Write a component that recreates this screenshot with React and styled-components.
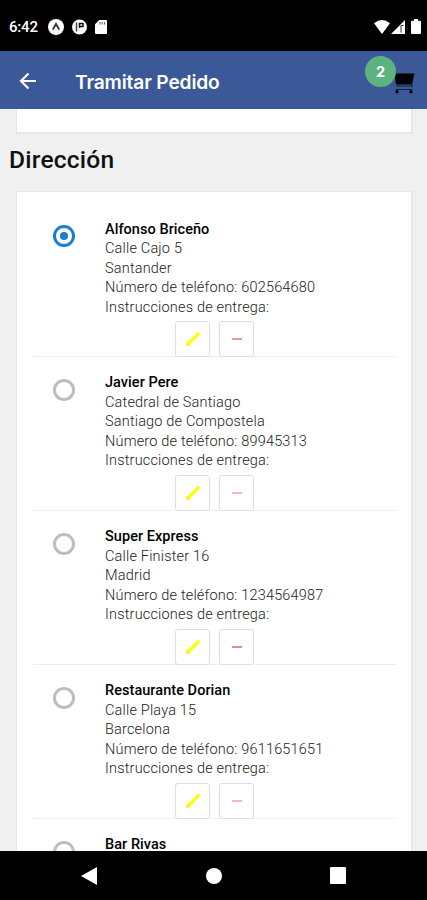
import { useState } from 'react';
import styled, { createGlobalStyle } from 'styled-components';

const GlobalStyle = createGlobalStyle`
    body {
        margin: 0;
        background: #f0f0f0;
        font-family: Roboto, "Liberation Sans", sans-serif;
    }
    * {
        box-sizing: border-box;
    }
`

const Screen = styled.div`
    width: 427px;
    height: 900px;
    display: flex;
    flex-direction: column;
    overflow: hidden;
    background: #f0f0f0;
`

const StatusBar = styled.div`
    flex: none;
    height: 51px;
    padding: 2px 6px 0 9px;
    display: flex;
    align-items: center;
    justify-content: space-between;
    background: #000;
    color: #fff;
`

const StatusGroup = styled.div`
    display: flex;
    align-items: center;
    gap: ${props => props.$gap};
`

const Clock = styled.span`
    width: 31px;
    font-size: 15px;
    font-weight: 500;
    letter-spacing: -0.2px;
    white-space: nowrap;
`

const BatteryIcon = styled.svg`
    margin-left: 5px;
`

const Header = styled.header`
    flex: none;
    height: 58px;
    padding: 1px 12px 0 18px;
    display: flex;
    align-items: center;
    background: #3b5998;
    color: #fff;
`

const BackButton = styled.button`
    width: 20px;
    height: 20px;
    padding: 0;
    border: 0;
    display: flex;
    background: none;
`

const HeaderTitle = styled.h1`
    flex: 1;
    margin: 2px 0 0 37px;
    font-family: Inter, sans-serif;
    font-size: 19.2px;
    font-weight: 600;
    line-height: 26px;
    letter-spacing: -0.15px;
`

const Cart = styled.div`
    position: relative;
    width: 23px;
    height: 23px;
    margin-top: 6px;
`

const Badge = styled.span`
    position: absolute;
    top: -16px;
    left: -27px;
    width: 31px;
    height: 31px;
    border-radius: 50%;
    display: flex;
    align-items: center;
    justify-content: center;
    background: #5cb380;
    font-family: Inter, sans-serif;
    font-size: 14.5px;
    font-weight: 700;
`

const Content = styled.main`
    flex: 1;
    min-height: 0;
    overflow: hidden;
`

const Card = styled.section`
    margin: 0 14px 0 16px;
    padding: 0 15px 0 16px;
    border: 1px solid #e6e8e8;
    border-width: ${props => props.$open ? '0 2px 2px 1px' : '1px 2px 2px 1px'};
    background: #fff;
`

const PreviousCard = styled(Card)`
    height: 25px;
`

const SectionTitle = styled.h2`
    margin: 9px 0 15px 9px;
    font-size: 24.6px;
    font-weight: 500;
    line-height: 33px;
    letter-spacing: 0.2px;
    color: #111;
`

const AddressList = styled.div`
    padding-top: 11px;
`

const Row = styled.div`
    height: 153.9px;
    padding-top: 16.6px;
    display: flex;
    border-bottom: 1px solid #efeff2;
`

const RadioCell = styled.div`
    flex: none;
    width: 72px;
    padding: 5.8px 0 0 20px;
`

const Radio = styled.button`
    width: 22px;
    height: 22px;
    padding: 0;
    border: 3px solid ${props => props.$checked ? '#1a7cd8' : '#bdbdbd'};
    border-radius: 50%;
    display: flex;
    align-items: center;
    justify-content: center;
    background: #fff;

    &::after {
        content: "";
        width: 8px;
        height: 8px;
        border-radius: 50%;
        background: ${props => props.$checked ? '#1a7cd8' : 'transparent'};
    }
`

const Details = styled.div`
    flex: 1;
`

const Line = styled.div`
    height: 19.5px;
    font-size: 14.5px;
    font-weight: ${props => props.$name ? 500 : 300};
    line-height: 19.5px;
    letter-spacing: ${props => props.$name ? '0.05px' : '0.18px'};
    color: ${props => props.$name ? '#000' : '#222'};
    white-space: nowrap;
`

const Actions = styled.div`
    margin: 3.8px 0 0 70px;
    display: flex;
    gap: 9px;
`

const ActionButton = styled.button`
    width: 35px;
    height: 36px;
    padding: 0;
    border: 1px solid #dcdcf3;
    border-radius: 3px;
    display: flex;
    align-items: center;
    justify-content: center;
    background: #fff;
`

const NavBar = styled.nav`
    flex: none;
    height: 49px;
    padding: 0 81px;
    display: flex;
    align-items: center;
    justify-content: space-between;
    background: #000;
`

const addresses = [
    { name: 'Alfonso Briceño', street: 'Calle Cajo 5', city: 'Santander', phone: '602564680', minus: '#f29494' },
    { name: 'Javier Pere', street: 'Catedral de Santiago', city: 'Santiago de Compostela', phone: '89945313', minus: '#fbb5b8' },
    { name: 'Super Express', street: 'Calle Finister 16', city: 'Madrid', phone: '1234564987', minus: '#f08a8a' },
    { name: 'Restaurante Dorian', street: 'Calle Playa 15', city: 'Barcelona', phone: '9611651651', minus: '#fbb5b8' },
    { name: 'Bar Rivas' },
]

function StatusIcons() {
    return <>
        <svg width="16" height="16" viewBox="0 0 16 16">
            <circle cx="8" cy="8" r="8" fill="#fff"/>
            <path d="M4.8 10.6 8 5l3.2 5.6" fill="none" stroke="#333" strokeWidth="1.9"/>
        </svg>
        <svg width="15" height="16" viewBox="0 0 15 16">
            <circle cx="7.5" cy="8" r="7.5" fill="#fff"/>
            <path d="M4.5 3.5v9" fill="none" stroke="#444" strokeWidth="1.5"/>
            <path d="M7.5 9V4.500H11v3H7.500" fill="none" stroke="#111" strokeWidth="1.5"/>
        </svg>
        <svg width="12" height="14" viewBox="0 0 12 14">
            <path d="M4.2 0H11q1 0 1 1v12q0 1-1 1H1q-1 0-1-1V4.2Z" fill="#fff"/>
            <path d="M5 2v2.5M7.3 2v2.5M9.6 2v2.5" stroke="#555" strokeWidth="1"/>
        </svg>
    </>
}

function SignalIcons() {
    return <>
        <svg width="16" height="14" viewBox="0 0 16 14">
            <path d="M0 3.2Q8-3 16 3.2L8 14Z" fill="#fff"/>
        </svg>
        <svg width="14" height="14" viewBox="0 0 14 14">
            <path d="M14 0v14H0Z" fill="#fff"/>
            <path d="M10 5.500v7M10 5.500h2.500" fill="none" stroke="#333" strokeWidth="1"/>
        </svg>
        <BatteryIcon width="10" height="15" viewBox="0 0 10 15">
            <path d="M3 0h4v1.7h2q1 0 1 1V14q0 1-1 1H1q-1 0-1-1V2.7q0-1 1-1h2Z" fill="#fff"/>
        </BatteryIcon>
    </>
}

function Address({ address, checked, onSelect }) {
    return <Row>
        <RadioCell>
            <Radio $checked={checked} onClick={onSelect} aria-label={address.name}/>
        </RadioCell>
        <Details>
            <Line $name>{address.name}</Line>
            {address.phone && <>
                <Line>{address.street}</Line>
                <Line>{address.city}</Line>
                <Line>Número de teléfono: {address.phone}</Line>
                <Line>Instrucciones de entrega:</Line>
                <Actions>
                    <ActionButton aria-label="Editar">
                        <svg width="16" height="16" viewBox="0 0 16 16">
                            <path d="m3.5 12.5 8-8" stroke="#ffff00" strokeWidth="3.2"/>
                            <path d="m12.3 3.7 1-1" stroke="#ffff00" strokeWidth="3.2" strokeLinecap="round"/>
                            <path d="m1 15 .8-4.500 3.700 3.700Z" fill="#f7f000"/>
                        </svg>
                    </ActionButton>
                    <ActionButton aria-label="Eliminar">
                        <svg width="10" height="2" viewBox="0 0 10 2">
                            <path d="M0 1h10" stroke={address.minus} strokeWidth="2"/>
                        </svg>
                    </ActionButton>
                </Actions>
            </>}
        </Details>
    </Row>
}

function App() {
    const [selected, setSelected] = useState(0);

    return <>
        <GlobalStyle/>
        <Screen>
            <StatusBar>
                <StatusGroup $gap="8px">
                    <Clock>6:42</Clock>
                    <StatusIcons/>
                </StatusGroup>
                <StatusGroup $gap="1px">
                    <SignalIcons/>
                </StatusGroup>
            </StatusBar>
            <Header>
                <BackButton aria-label="Volver">
                    <svg width="20" height="20" viewBox="0 0 20 20">
                        <path d="M18 10H3M10.500 2.500 3 10l7.500 7.500" fill="none" stroke="#fff" strokeWidth="2.2"/>
                    </svg>
                </BackButton>
                <HeaderTitle>Tramitar Pedido</HeaderTitle>
                <Cart>
                    <svg width="23" height="23" viewBox="0 0 23 23">
                        <path d="M0 1h3l3 14" fill="none" stroke="#33513f" strokeWidth="1.5"/>
                        <path d="M2.500 1.500h20L20 12.500H4Z" fill="#000"/>
                        <path d="M4.500 14h15.500M20 12v3.500M4 17.500h16.500" fill="none" stroke="#14213f" strokeWidth="1"/>
                        <circle cx="5" cy="19.7" r="1.7"/>
                        <circle cx="19" cy="19.7" r="1.7"/>
                    </svg>
                    <Badge>2</Badge>
                </Cart>
            </Header>
            <Content>
                <PreviousCard $open/>
                <SectionTitle>Dirección</SectionTitle>
                <Card>
                    <AddressList>
                        {addresses.map((address, i) =>
                            <Address key={address.name} address={address} checked={selected === i} onSelect={() => setSelected(i)}/>
                        )}
                    </AddressList>
                </Card>
            </Content>
            <NavBar>
                <svg width="16" height="18" viewBox="0 0 16 18">
                    <path d="M16 0v18L0 9Z" fill="#fff"/>
                </svg>
                <svg width="16" height="16" viewBox="0 0 16 16">
                    <circle cx="8" cy="8" r="8" fill="#fff"/>
                </svg>
                <svg width="16" height="17" viewBox="0 0 16 17">
                    <rect width="16" height="17" rx="1" fill="#fff"/>
                </svg>
            </NavBar>
        </Screen>
    </>
}

export default App;
